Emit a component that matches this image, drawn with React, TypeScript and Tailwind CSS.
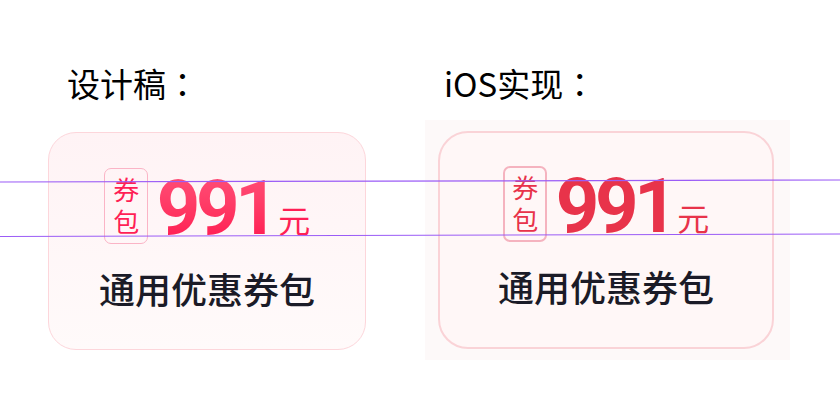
import React from 'react';

const cjk = { fontFamily: '"Noto Sans CJK SC", "Noto Sans", sans-serif' };
const title = { fontFamily: '"Noto Sans CJK TC", "Noto Sans", sans-serif' };
const digits = { fontFamily: 'Roboto, "Noto Sans CJK SC", sans-serif' };

function Coupon({ ios }: { ios?: boolean }) {
  const red = ios ? 'text-[#e8334a]' : 'text-[#ff1f55]';
  return (
    <div
      className={
        ios
          ? 'w-[336px] h-[218px] rounded-[30px] border-2 border-[#fad3d7] bg-[#fff7f7] flex flex-col items-center pt-[33px]'
          : 'w-[318px] h-[218px] rounded-[28px] border-[1.5px] border-[#fdd6db] bg-gradient-to-b from-[#fff3f5] to-[#fffafa] flex flex-col items-center pt-[35px]'
      }
    >
      <div className="flex items-start">
        <div
          className={
            'w-[44px] h-[76px] rounded-[7px] flex items-center justify-center ' +
            red +
            (ios ? ' border-2 border-[#f5b3bf]' : ' border-[1.5px] border-[#fbb4c6]')
          }
          style={cjk}
        >
          <span className="[writing-mode:vertical-rl] text-[26px] leading-[30px] tracking-[6px] pt-[6px]">券包</span>
        </div>
        <span
          className={
            'ml-[9px] mt-[2px] text-[76px] leading-[76px] font-bold tracking-[-4.5px] ' +
            (ios ? 'text-[#e8334a]' : 'bg-gradient-to-b from-[#ff4f78] to-[#ff0f4f] bg-clip-text text-transparent')
          }
          style={digits}
        >
          991
        </span>
        <span className={'ml-[4px] mt-[30px] text-[32px] leading-[42px] ' + red} style={cjk}>
          元
        </span>
      </div>
      <div className="mt-[20px] text-[36px] leading-[44px] font-medium text-[#1b1b27]" style={cjk}>
        通用优惠券包
      </div>
    </div>
  );
}

export default function App() {
  return (
    <div className="relative w-[840px] h-[420px] bg-white overflow-hidden">
      <div className="flex pt-[61px]">
        <div className="ml-[48px] flex flex-col">
          <div className="ml-[19px] h-[44px] text-[33px] leading-[44px] text-black" style={title}>
            设计稿：
          </div>
          <div className="mt-[27px]">
            <Coupon />
          </div>
        </div>
        <div className="ml-[59px] flex flex-col">
          <div className="ml-[19px] h-[44px] text-[33px] leading-[44px] text-black" style={title}>
            iOS实现：
          </div>
          <div className="mt-[15px] w-[365px] h-[240px] bg-[#fdf9f9] pl-[13px] pt-[11px]">
            <Coupon ios />
          </div>
        </div>
      </div>

      {/* alignment guides drawn over both cards */}
      <svg className="absolute inset-0 pointer-events-none" width="840" height="420">
        <line x1="0" y1="182" x2="840" y2="180" stroke="#9b5cf6" strokeWidth="1.2" />
        <line x1="0" y1="236.5" x2="840" y2="234" stroke="#9b5cf6" strokeWidth="1.2" />
      </svg>
    </div>
  );
}
